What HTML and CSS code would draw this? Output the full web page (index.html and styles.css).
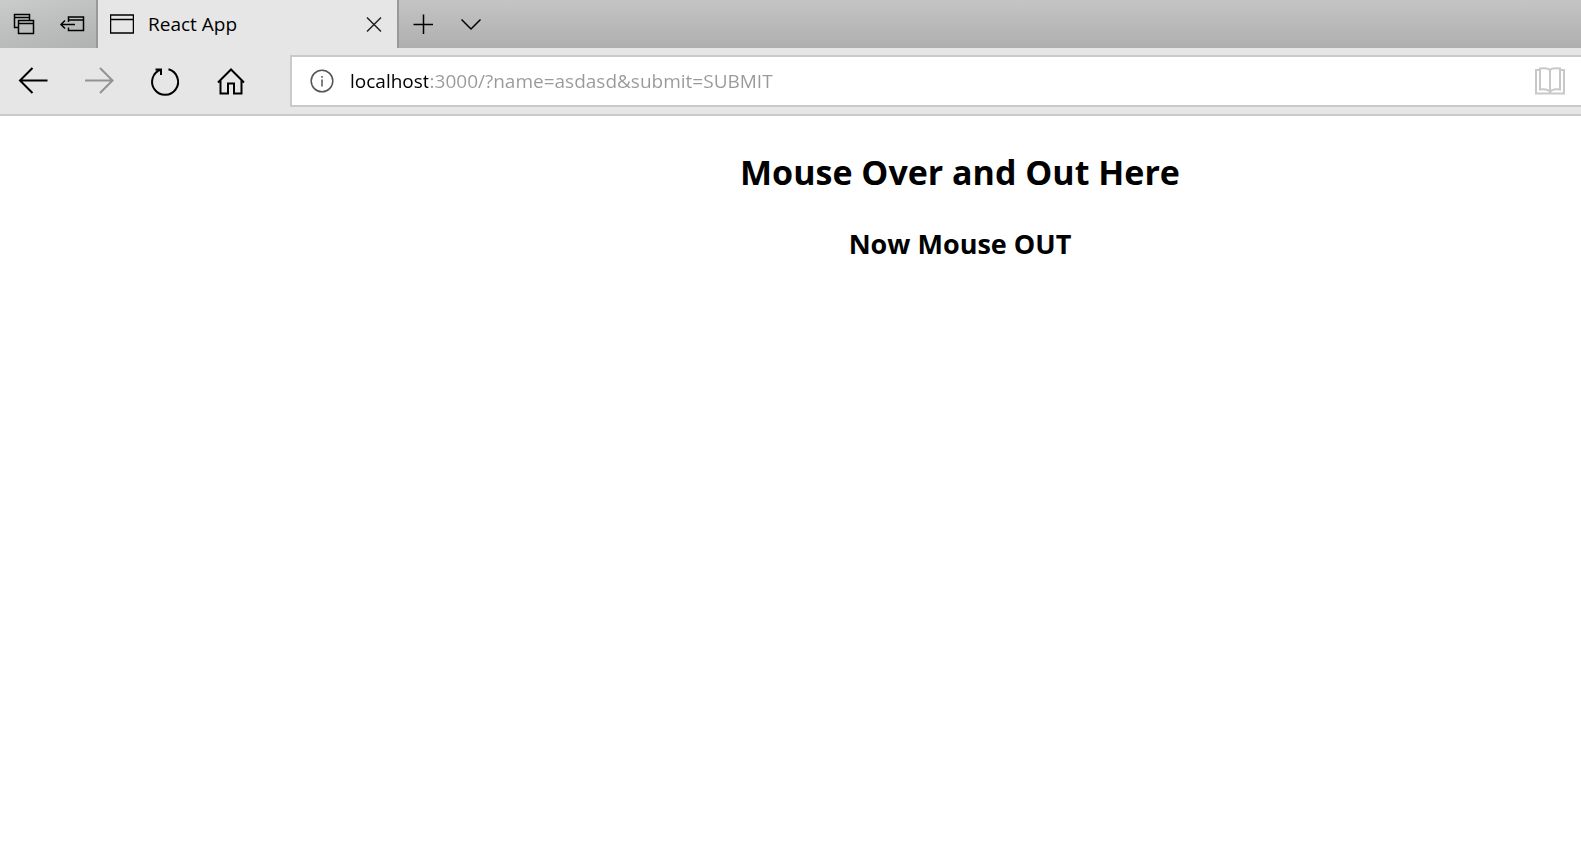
FILE: index.html
```
<!DOCTYPE html>
<html lang="en">
<head>
<meta charset="utf-8">
<title>React App</title>
<link rel="stylesheet" href="styles.css">
</head>
<body>
<header class="browser">
  <div class="tab-strip">
    <div class="tab-tools">
      <button class="strip-button" type="button" aria-label="Tabs you've set aside">
        <svg class="icon" width="48" height="48" viewBox="0 0 48 48"><path d="M18.5 27.5H14.5V14.5H29.5V20M14.5 17.5H29.5M18.5 20.5H33.5V33.5H18.5ZM18.5 23.5H33.5"/></svg>
      </button>
      <button class="strip-button" type="button" aria-label="Set these tabs aside">
        <svg class="icon" width="48" height="48" viewBox="0 0 48 48"><path d="M20.5 22V17H35.5V30.5H20.5V27.5M20.5 20H35.5M27 24.5H13.5M17 20.5L13 24.5L17 28.5"/></svg>
      </button>
    </div>
    <div class="tab">
      <svg class="icon" width="24" height="20" viewBox="0 0 24 20"><path d="M.5 1H23.5V19H.5ZM.5 5.5H23.5"/></svg>
      <span class="tab-title">React App</span>
      <button class="tab-close" type="button" aria-label="Close tab">
        <svg class="icon" width="48" height="48" viewBox="0 0 48 48"><path d="M18 17.5L32 31.5M32 17.5L18 31.5"/></svg>
      </button>
    </div>
    <button class="strip-button" type="button" aria-label="New tab">
      <svg class="icon" width="48" height="48" viewBox="0 0 48 48"><path d="M14.5 24.5H34M24.5 14.5V34"/></svg>
    </button>
    <button class="strip-button" type="button" aria-label="Show tab previews">
      <svg class="icon" width="48" height="48" viewBox="0 0 48 48"><path d="M14.5 19.5L24 29L33.5 19.5"/></svg>
    </button>
  </div>
  <nav class="toolbar">
    <button class="nav-button" type="button" aria-label="Back">
      <svg class="icon nav-icon" width="66" height="66" viewBox="0 0 66 66"><path d="M47.5 32.5H20M32.5 20L20 32.5L32.5 45"/></svg>
    </button>
    <button class="nav-button" type="button" aria-label="Forward" disabled>
      <svg class="icon nav-icon" width="66" height="66" viewBox="0 0 66 66"><path d="M19 32.5H46.5M34 20L46.5 32.5L34 45"/></svg>
    </button>
    <button class="nav-button" type="button" aria-label="Refresh">
      <svg class="icon nav-icon" width="66" height="66" viewBox="0 0 66 66"><path d="M36.5 21.3A13 13 0 1 1 29 21.5M23.5 21.5H29V27"/></svg>
    </button>
    <button class="nav-button" type="button" aria-label="Home">
      <svg class="icon nav-icon" width="66" height="66" viewBox="0 0 66 66"><path d="M20 34.5L33 21.5L46 34.5M22.5 32.5V45.5H30V35.5H36V45.5H43.5V32.5"/></svg>
    </button>
    <div class="address">
      <button class="site-info" type="button" aria-label="Site information">
        <svg class="icon" width="24" height="24" viewBox="0 0 24 24"><circle cx="12" cy="12" r="10.8"/><path d="M12 10.5V17.5M12 7V8.8"/></svg>
      </button>
      <input class="address-input" type="text" aria-label="Address" spellcheck="false" value="localhost:3000/?name=asdasd&amp;submit=SUBMIT">
      <button class="reading-view" type="button" aria-label="Reading view" disabled>
        <svg class="icon book" width="30" height="28" viewBox="0 0 30 28"><path d="M5 3H1V26.5H29V3H25M15 3C13 .8 9 1 5 1.5V22.5C9 22 13 22 15 25C17 22 21 22 25 22.5V1.5C21 1 17 .8 15 3V25"/></svg>
      </button>
    </div>
  </nav>
</header>
<main class="page">
  <h1 class="title">Mouse Over and Out Here</h1>
  <h2 class="status">Now Mouse OUT</h2>
</main>
</body>
</html>
```
FILE: styles.css
```
* {
  box-sizing: border-box;
}

body {
  margin: 0;
  background: #fff;
  color: #000;
  font-family: "Open Sans", "Noto Sans", sans-serif;
  overflow-x: hidden;
}

button {
  flex: none;
  display: flex;
  align-items: center;
  justify-content: center;
  padding: 0;
  border: 0;
  background: none;
  color: inherit;
}

.icon {
  display: block;
  flex: none;
  fill: none;
  stroke: currentColor;
  stroke-width: 1.5;
}

.tab-strip {
  display: flex;
  height: 48px;
  background: linear-gradient(#c4c4c4, #afafaf);
}

.tab-tools {
  display: flex;
  background: linear-gradient(165deg, #cacccc, #b0b2b2);
}

.strip-button {
  width: 48px;
  height: 48px;
}

.tab {
  display: flex;
  align-items: center;
  width: 303px;
  padding-left: 12px;
  border: solid #999;
  border-width: 0 2px;
  background: #e6e6e6;
}

.tab-title {
  flex: 1;
  padding-left: 14px;
  font-size: 19px;
  line-height: 48px;
}

.tab-close {
  width: 48px;
  height: 48px;
  color: #222;
}

.toolbar {
  display: flex;
  height: 68px;
  border-bottom: 2px solid #cacaca;
  background: #e6e6e6;
}

.nav-button {
  width: 66px;
  height: 66px;
}

.nav-icon {
  stroke-width: 2;
}

.nav-button:disabled {
  color: #929292;
}

.address {
  flex: 1;
  display: flex;
  align-items: center;
  height: 52px;
  margin: 7px 0 0 26px;
  padding: 0 16px 0 18px;
  border: 2px solid #cacaca;
  border-right: 0;
  background: #fff;
}

.site-info {
  color: #555;
}

.address-input {
  flex: 1;
  min-width: 0;
  height: 48px;
  margin-left: 16px;
  padding: 0;
  border: 0;
  outline: 0;
  background: linear-gradient(90deg, #000 9ch, #999 9ch);
  background: linear-gradient(90deg, #000 78px, #999 78px);
  -webkit-background-clip: text;
  background-clip: text;
  color: transparent;
  caret-color: #000;
  font-family: "Open Sans", sans-serif;
  font-size: 19px;
}

.book {
  color: #c8c8c8;
  stroke-width: 2;
}

.page {
  padding: 32px 0 32px 339px;
  text-align: center;
}

.title {
  margin: 0;
  font-size: 34px;
  line-height: 48px;
}

.status {
  margin: 30px 0 0;
  font-size: 27px;
  line-height: 36px;
}
```
